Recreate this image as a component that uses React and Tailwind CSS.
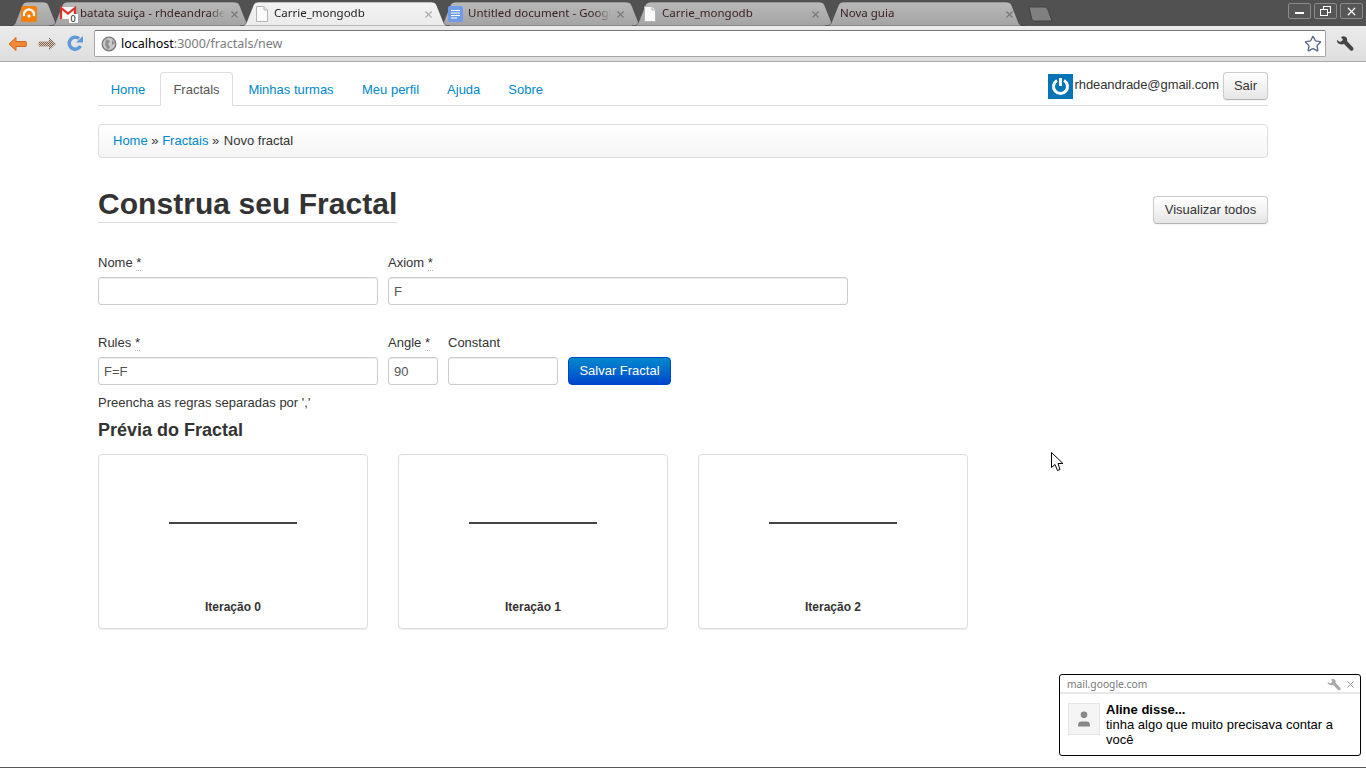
import React from 'react';
import { Star, X, User } from 'lucide-react';

const uiFont = "[font-family:'Noto_Sans',sans-serif]";

// forma da aba do chrome, calculada a partir da largura
const tabPath = (w, h) =>
  `M0 ${h} C5 ${h} 6 ${h - 2} 7 ${h - 5} L13 4 C14 1 16 0 19 0 L${w - 19} 0 C${w - 16} 0 ${w - 14} 1 ${w - 13} 4 L${w - 7} ${h - 5} C${w - 6} ${h - 2} ${w - 5} ${h} ${w} ${h} Z`;

const FileIcon = () => (
  <svg width="16" height="16" viewBox="0 0 16 16" className="shrink-0">
    <path d="M2.5 .5 H10 L13.5 4 V15.5 H2.5 Z" fill="#fafafa" stroke="#b4b4b4" />
    <path d="M10 .5 V4 H13.5" fill="#e4e4e4" stroke="#b4b4b4" />
  </svg>
);

const OrangeIcon = () => (
  <svg width="16" height="16" viewBox="0 0 16 16" className="shrink-0">
    <rect width="16" height="16" rx="2.5" fill="#f77f0e" />
    <path d="M3 10 A5.2 5.2 0 1 1 13 10" fill="none" stroke="#fff" strokeWidth="2.4" />
    <circle cx="8" cy="10" r="1.6" fill="#fff" />
  </svg>
);

const GmailIcon = () => (
  <svg width="18" height="18" viewBox="0 0 18 18" className="-mr-[2px] shrink-0">
    <rect x="0" y="2" width="16" height="12" fill="#f4f4f4" />
    <path d="M1 14 V3 L8 8.5 L15 3 V14" fill="none" stroke="#d9342b" strokeWidth="2.2" />
    <rect x="9" y="9" width="9" height="9" fill="#fff" />
    <text x="10.5" y="17" fontSize="9" fontFamily="Noto Sans" fill="#111">0</text>
  </svg>
);

const DocsIcon = () => (
  <svg width="16" height="16" viewBox="0 0 16 16" className="shrink-0">
    <rect width="15" height="16" rx="2" fill="#6e9bec" />
    <path d="M3 4.5 H12 M3 7 H12 M3 9.5 H12 M3 12 H9" stroke="#fff" strokeWidth="1.2" />
  </svg>
);

const Tab = ({ w, widthClass, active, icon, title, close = true, pl, pr }) => (
  <div className={`relative h-[24px] shrink-0 -mr-[13px] ${active ? 'z-10' : ''} ${widthClass}`}>
    <svg width={w} height="24" viewBox={`0 0 ${w} 24`} className="absolute left-0 top-0">
      <defs>
        <linearGradient id={active ? 'tabOn' : 'tabOff'} x1="0" y1="0" x2="0" y2="1">
          <stop offset="0" stopColor={active ? '#f3f3f3' : '#b9b9b9'} />
          <stop offset="1" stopColor={active ? '#ebebeb' : '#a3a3a3'} />
        </linearGradient>
      </defs>
      <path d={tabPath(w, 24)} fill={`url(#${active ? 'tabOn' : 'tabOff'})`} stroke="#3c3c3c" strokeOpacity="0.55" />
    </svg>
    <div className={`relative flex h-full items-center gap-[4px] ${pl} ${pr} ${uiFont}`}>
      {icon}
      {title && (
        <span className={`flex-1 overflow-hidden whitespace-nowrap pb-[2px] text-[11.5px] [mask-image:linear-gradient(to_right,black_calc(100%-16px),transparent)] ${active ? 'text-[#222]' : 'text-[#3a2222]'}`}>{title}</span>
      )}
      {close && <X size={11} strokeWidth={2.4} className={active ? 'shrink-0 text-[#aaa]' : 'shrink-0 text-[#777]'} />}
    </div>
  </div>
);

const WinButton = ({ children }) => (
  <div className="flex h-[16px] w-[23px] items-center justify-center rounded-[2px] border border-[#8a8a8a] bg-[#565656] text-white">
    {children}
  </div>
);

const WrenchIcon = ({ size = 18, color = '#444' }) => (
  <svg width={size} height={size} viewBox="0 0 18 18">
    <path d="M1 5 L4 7 L7 5 L5 2 C7 0.5 10 1 11 3.5 C11.3 4.5 11.2 5.5 11 6 L17 12.5 C17.8 13.5 17.5 14.5 16.8 15.3 C16 16 15 16 14.2 15.3 L8 9 C6 9.8 3.5 9.5 2 8 C1 7 0.8 6 1 5 Z" fill={color} />
  </svg>
);

const Label = ({ children, req, className = '' }) => (
  <label className={`block h-[20px] text-[13px] leading-[20px] text-[#333] ${className}`}>
    {children}
    {req && <> <span className="border-b border-dotted border-[#bbb] leading-none">*</span></>}
  </label>
);

const Input = ({ value = '', className = '' }) => (
  <input
    readOnly
    value={value}
    className={`h-[28px] rounded-[3px] border border-[#ccc] bg-white px-[5px] text-[13px] text-[#555] shadow-[inset_0_1px_1px_rgba(0,0,0,0.075)] ${className}`}
  />
);

const Button = ({ children, className = '' }) => (
  <button className={`h-[28px] rounded-[4px] border border-[#ccc] border-b-[#b3b3b3] bg-gradient-to-b from-white to-[#e6e6e6] text-[13px] text-[#333] shadow-[0_1px_2px_rgba(0,0,0,0.05)] ${className}`}>
    {children}
  </button>
);

const NavTab = ({ children, active, className = 'px-[12px]' }) =>
  active ? (
    <a className={`-mb-px block h-[34px] rounded-t-[4px] border border-[#ddd] border-b-white bg-white text-center text-[13px] leading-[34px] text-[#555] ${className}`}>{children}</a>
  ) : (
    <a className={`-mb-px block h-[34px] border border-transparent text-center text-[13px] leading-[34px] text-[#08c] ${className}`}>{children}</a>
  );

const PreviewCard = ({ label }) => (
  <div className="flex h-[175px] w-[270px] flex-col items-center rounded-[4px] border border-[#ddd] shadow-[0_1px_1px_rgba(0,0,0,0.075)]">
    <div className="mt-[67px] h-[2px] w-[128px] bg-[#444]" />
    <div className="mt-[74px] text-[12px] font-bold leading-[18px] text-[#333]">{label}</div>
  </div>
);

export default function App() {
  return (
    <div className="relative h-[768px] w-[1366px] overflow-hidden bg-white [font-family:'Liberation_Sans',sans-serif]">
      {/* barra de abas */}
      <div className="flex h-[26px] items-end justify-between bg-[#515151] pl-[9px]">
        <div className="flex items-end">
          <Tab w={53} widthClass="w-[53px]" icon={<OrangeIcon />} close={false} pl="pl-[12px]" pr="pr-0" />
          <Tab w={204} widthClass="w-[204px]" icon={<GmailIcon />} title="batata suiça - rhdeandrade" pl="pl-[11px]" pr="pr-[13px]" />
          <Tab w={210} widthClass="w-[210px]" active icon={<FileIcon />} title="Carrie_mongodb" pl="pl-[14px]" pr="pr-[16px]" />
          <Tab w={208} widthClass="w-[208px]" icon={<DocsIcon />} title="Untitled document - Google" pl="pl-[11px]" pr="pr-[19px]" />
          <Tab w={206} widthClass="w-[206px]" icon={<FileIcon />} title="Carrie_mongodb" pl="pl-[10px]" pr="pr-[17px]" />
          <Tab w={200} widthClass="w-[200px]" title="Nova guia" pl="pl-[15px]" pr="pr-[10px]" />
          <svg width="26" height="16" viewBox="0 0 26 16" className="mb-[4px] ml-[15px]">
            <path d="M2 1 H17 C19 1 20 2 21 4 L25 15 H8 C6 15 5 14 4.5 12 Z" fill="#808080" stroke="#444" />
          </svg>
        </div>
        <div className="mb-[7px] mr-[3px] flex gap-[3px]">
          <WinButton><div className="mt-[3px] h-[2px] w-[9px] bg-white" /></WinButton>
          <WinButton>
            <svg width="11" height="10" viewBox="0 0 11 10" fill="none" stroke="#fff">
              <rect x="3.5" y="0.5" width="7" height="6" />
              <rect x="0.5" y="3.5" width="7" height="6" fill="#565656" />
            </svg>
          </WinButton>
          <WinButton><X size={13} strokeWidth={2.4} /></WinButton>
        </div>
      </div>

      {/* barra de endereço */}
      <div className="flex h-[36px] items-center border-b border-[#a8a8a8] bg-gradient-to-b from-[#ebebeb] to-[#dedede] pl-[8px] pr-[12px]">
        <svg width="20" height="16" viewBox="0 0 20 16" className="shrink-0">
          <path d="M8 1.5 L1 8 L8 14.5 V10.5 H18 Q19 8 18 5.5 H8 Z" fill="#f0883a" stroke="#d26a1e" />
        </svg>
        <svg width="20" height="16" viewBox="0 0 20 16" className="ml-[9px] shrink-0">
          <defs>
            <pattern id="hatch" width="2" height="2" patternUnits="userSpaceOnUse">
              <rect width="2" height="2" fill="#d8cfc6" />
              <rect width="1" height="1" fill="#80604a" />
              <rect x="1" y="1" width="1" height="1" fill="#80604a" />
            </pattern>
          </defs>
          <path d="M12 1.5 L19 8 L12 14.5 V10.5 H2 Q1 8 2 5.5 H12 Z" fill="url(#hatch)" />
        </svg>
        <svg width="17" height="17" viewBox="0 0 17 17" className="ml-[10px] shrink-0">
          <path d="M13.5 11 A6 6 0 1 1 12 3.5" fill="none" stroke="#5c9ad8" strokeWidth="3.4" />
          <path d="M9 7.5 L16 7.5 L16 1 Z" fill="#5c9ad8" />
        </svg>
        <div className="ml-[10px] flex h-[27px] flex-1 items-center rounded-[2px] border border-[#a5a5a5] border-t-[#777] bg-white pl-[6px] pr-[3px]">
          <svg width="16" height="16" viewBox="0 0 16 16" className="shrink-0">
            <circle cx="8" cy="8" r="6.8" fill="#c9c9c9" stroke="#777" strokeWidth="1.3" />
            <path d="M5 3 L9 5 L7 8 L9 11 L7 14 L4 9 Z M11 4 L14 7 L11 9 Z" fill="#8f8f8f" />
          </svg>
          <span className={`ml-[4px] flex-1 pt-[2px] text-[12.5px] text-[#7c7c7c] ${uiFont}`}>
            <span className="text-black">localhost</span>:3000/fractals/new
          </span>
          <Star size={18} strokeWidth={1.9} className="text-[#5b6b8c]" />
        </div>
        <div className="ml-[10px] shrink-0"><WrenchIcon /></div>
      </div>

      {/* pagina */}
      <div className="mx-auto w-[1170px] pt-[10px] text-[13px] text-[#333]">
        <div className="flex h-[34px] justify-between border-b border-[#ddd]">
          <nav className="flex gap-[2px]">
            <NavTab className="w-[60px]">Home</NavTab>
            <NavTab active className="w-[73px]">Fractals</NavTab>
            <NavTab className="w-[112px]">Minhas turmas</NavTab>
            <NavTab>Meu perfil</NavTab>
            <NavTab>Ajuda</NavTab>
            <NavTab>Sobre</NavTab>
          </nav>
          <div className="flex items-start">
            <div className="mt-[2px] flex h-[25px] w-[25px] items-center justify-center bg-[#0774b8]">
              <svg width="19" height="19" viewBox="0 0 19 19" fill="none" stroke="#fff" strokeWidth="3">
                <path d="M6 3.5 A7 7 0 1 0 13 3.5" />
                <path d="M9.5 1 V9" />
              </svg>
            </div>
            <span className="ml-[2px] mr-[4px] leading-[26px] tracking-[-0.08px]">rhdeandrade@gmail.com</span>
            <Button className="w-[45px]">Sair</Button>
          </div>
        </div>

        <div className="mt-[18px] h-[34px] rounded-[4px] border border-[#ddd] bg-gradient-to-b from-white to-[#f5f5f5] px-[14px] leading-[32px] shadow-[inset_0_1px_0_#fff]">
          <a className="text-[#08c]">Home</a> » <a className="text-[#08c]">Fractais</a> » <span className="ml-px">Novo fractal</span>
        </div>

        <div className="mt-[29px] flex items-start justify-between">
          <h1 className="h-[36px] border-b border-[#ddd] text-[30px] font-bold leading-[34px] tracking-[0.05px] text-[#333]">Construa seu Fractal</h1>
          <Button className="mt-[9px] w-[115px]">Visualizar todos</Button>
        </div>

        <div className="mt-[29px] flex gap-[10px]">
          <div>
            <Label req>Nome</Label>
            <Input className="mt-[4px] w-[280px]" />
          </div>
          <div>
            <Label req>Axiom</Label>
            <Input value="F" className="mt-[4px] w-[460px]" />
          </div>
        </div>

        <div className="mt-[28px] flex items-end gap-[10px]">
          <div>
            <Label req>Rules</Label>
            <Input value="F=F" className="mt-[4px] w-[280px]" />
          </div>
          <div>
            <Label req>Angle</Label>
            <Input value="90" className="mt-[4px] w-[50px]" />
          </div>
          <div>
            <Label>Constant</Label>
            <Input className="mt-[4px] w-[110px]" />
          </div>
          <button className="h-[28px] w-[103px] rounded-[4px] border border-[#04c] bg-gradient-to-b from-[#08c] to-[#04c] text-[13px] text-white">
            Salvar Fractal
          </button>
        </div>

        <p className="mt-[9px] h-[18px] leading-[18px]">Preencha as regras separadas por ','</p>
        <h3 className="mt-[6px] h-[24px] text-[18px] font-bold leading-[24px]">Prévia do Fractal</h3>

        <div className="mt-[12px] flex gap-[30px]">
          <PreviewCard label="Iteração 0" />
          <PreviewCard label="Iteração 1" />
          <PreviewCard label="Iteração 2" />
        </div>
      </div>

      {/* ponteiro do mouse */}
      <svg width="13" height="20" viewBox="0 0 13 20" className="absolute left-[1051px] top-[452px]">
        <path d="M.5 .5 V15.5 L4 12.5 L6.5 18.5 L9 17.5 L7 11.5 H12 Z" fill="#fff" stroke="#000" />
      </svg>

      {/* notificacao do chrome */}
      <div className="absolute left-[1059px] top-[674px] h-[82px] w-[302px] rounded-[3px] border border-black bg-white">
        <div className={`flex h-[19px] items-center justify-between border-b-2 border-[#e8e8e8] pl-[7px] pr-[4px] pt-[2px] text-[10.25px] text-[#777] ${uiFont}`}>
          <span>mail.google.com</span>
          <div className="flex items-center gap-[4px]">
            <WrenchIcon size={14} color="#aaa" />
            <X size={11} strokeWidth={2} className="text-[#999]" />
          </div>
        </div>
        <div className="flex pl-[8px] pr-[10px] pt-[9px]">
          <div className="flex h-[32px] w-[32px] shrink-0 items-center justify-center border border-[#e5e5e5] bg-[#f5f5f5]">
            <User size={20} fill="#888" strokeWidth={0} />
          </div>
          <div className="-mt-px ml-[6px] text-[13px] leading-[15px] text-black">
            <div className="font-bold">Aline disse...</div>
            <div>tinha algo que muito precisava contar a você</div>
          </div>
        </div>
      </div>

      <div className="absolute bottom-0 left-0 h-px w-full bg-[#555]" />
    </div>
  );
}
